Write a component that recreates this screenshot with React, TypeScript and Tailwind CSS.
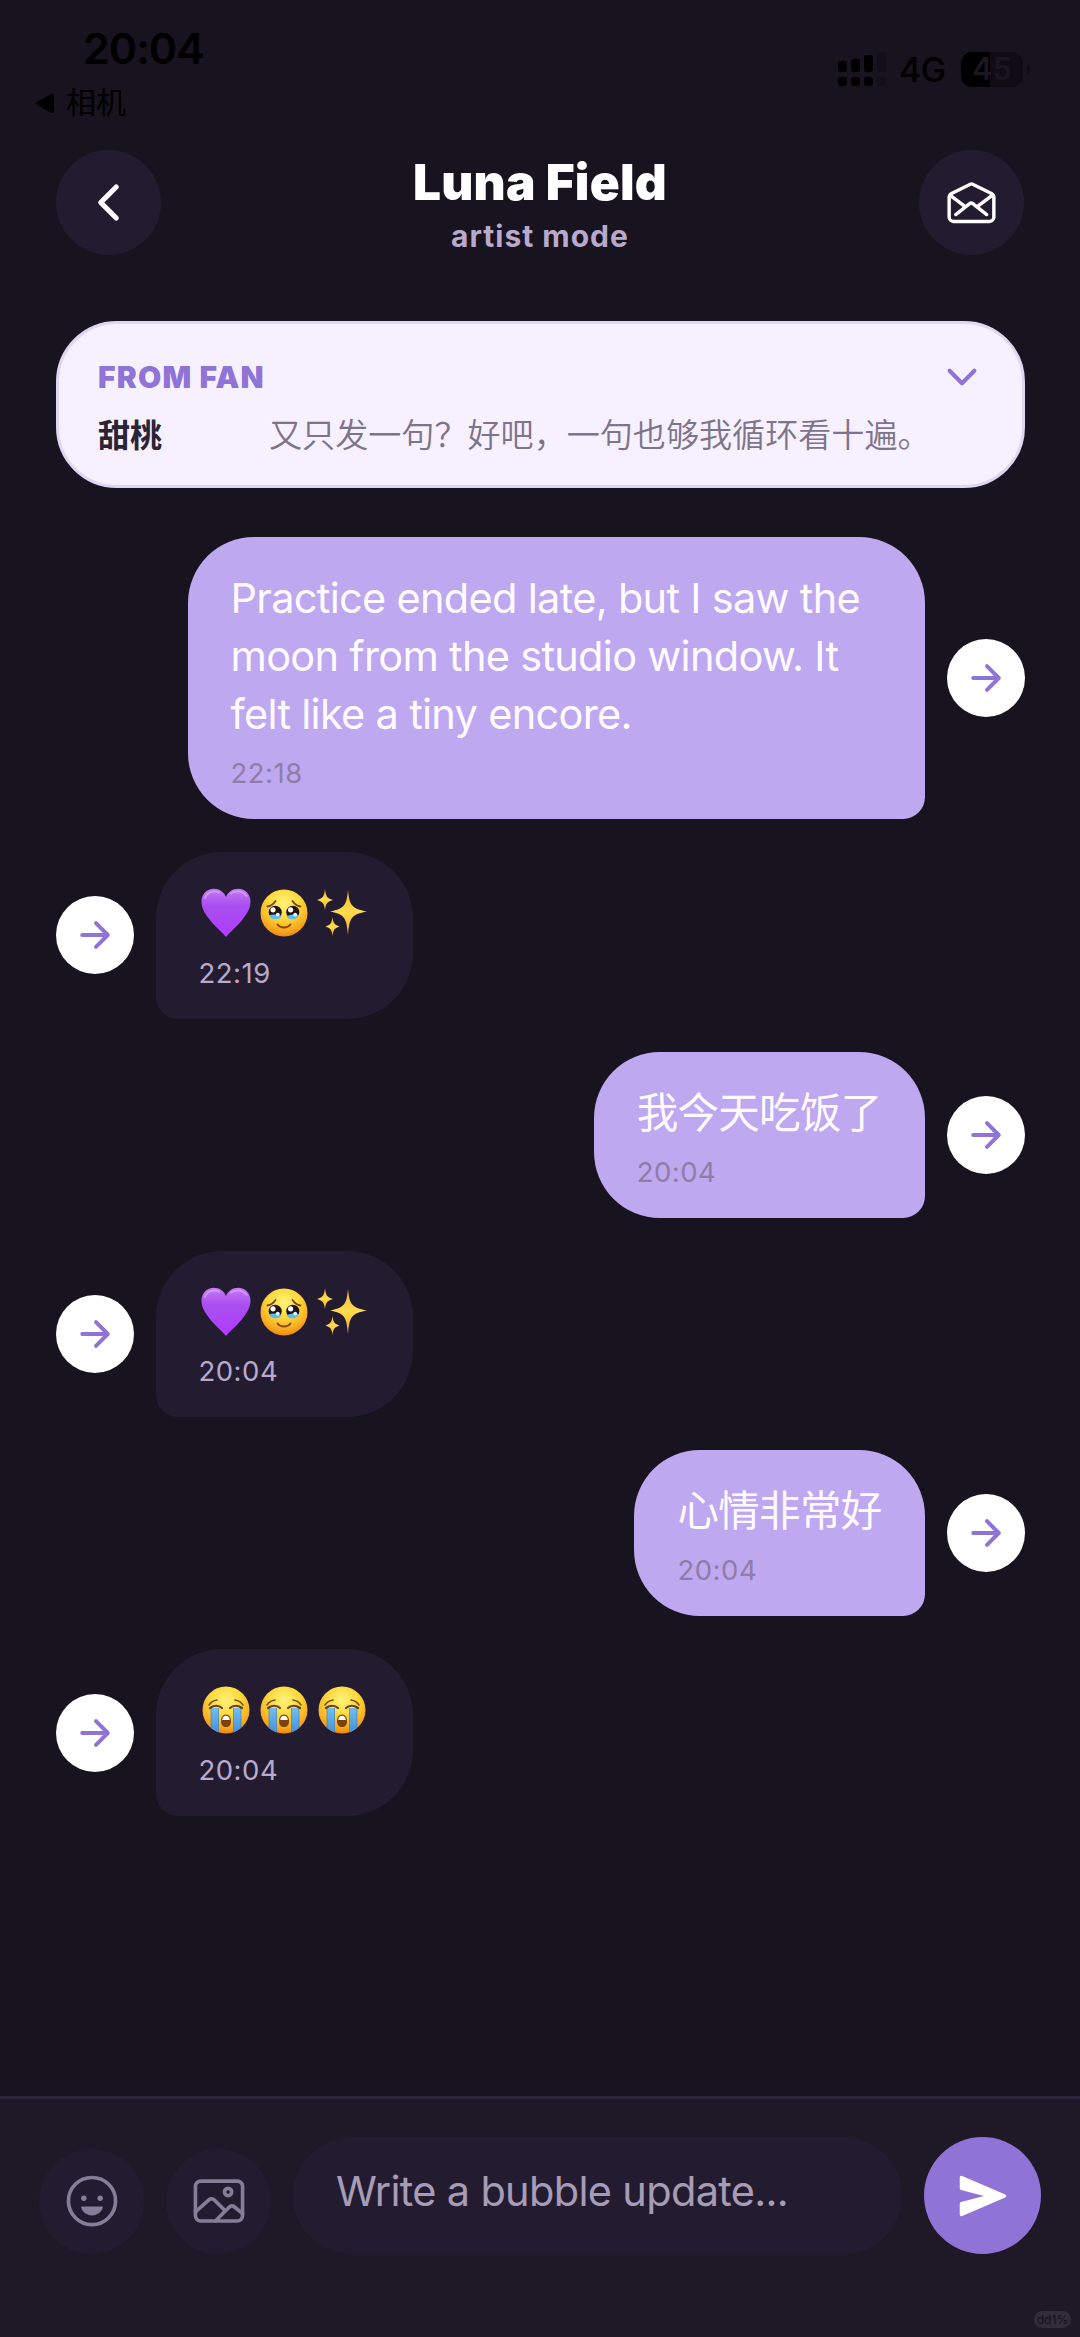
import type { ReactNode } from "react";
import {
  IoArrowForward,
  IoChevronBack,
  IoChevronDown,
  IoHappyOutline,
  IoImageOutline,
  IoMailOpenOutline,
} from "react-icons/io5";

type Message = {
  id: number;
  mine: boolean;
  time: string;
  text?: string;
  emojis?: string[];
};

const messages: Message[] = [
  {
    id: 1,
    mine: true,
    time: "22:18",
    text: "Practice ended late, but I saw the moon from the studio window. It felt like a tiny encore.",
  },
  { id: 2, mine: false, time: "22:19", emojis: ["heart", "tears", "sparkles"] },
  { id: 3, mine: true, time: "20:04", text: "我今天吃饭了" },
  { id: 4, mine: false, time: "20:04", emojis: ["heart", "tears", "sparkles"] },
  { id: 5, mine: true, time: "20:04", text: "心情非常好" },
  { id: 6, mine: false, time: "20:04", emojis: ["crying", "crying", "crying"] },
];

const EmojiDefs = () => (
  <svg className="absolute size-0" aria-hidden="true">
    <defs>
      <radialGradient id="face" cx="0.5" cy="0.3" r="0.72">
        <stop offset="0" stopColor="#fff27a" />
        <stop offset="0.45" stopColor="#fdd93c" />
        <stop offset="0.8" stopColor="#f9a91f" />
        <stop offset="1" stopColor="#e88610" />
      </radialGradient>
      <linearGradient id="heart" x1="0" y1="0" x2="0" y2="1">
        <stop offset="0" stopColor="#c57af2" />
        <stop offset="0.35" stopColor="#a94ff0" />
        <stop offset="1" stopColor="#b03bff" />
      </linearGradient>
      <linearGradient id="spark" x1="0" y1="0" x2="0" y2="1">
        <stop offset="0" stopColor="#f3b53c" />
        <stop offset="0.5" stopColor="#ffdc4c" />
        <stop offset="1" stopColor="#f0a92e" />
      </linearGradient>
      <linearGradient id="tear" x1="0" y1="0" x2="0" y2="1">
        <stop offset="0" stopColor="#74bdee" />
        <stop offset="1" stopColor="#3f8fe0" />
      </linearGradient>
      <clipPath id="faceClip">
        <circle cx="24" cy="24" r="23.5" />
      </clipPath>
    </defs>
  </svg>
);

const Heart = () => (
  <svg viewBox="0 0 50 50" className="h-[50px] w-[50px]" role="img" aria-label="💜">
    <path
      d="M25 49C22 45 14 39 7 29.5C2.5 23.5 .5 19 .5 13.5C.5 6 6 .8 12.8 .8C18.5 .8 23 4 25 9C27 4 31.5 .8 37.2 .8C44 .8 49.5 6 49.5 13.5C49.5 19 47.5 23.5 43 29.5C36 39 28 45 25 49Z"
      fill="url(#heart)"
    />
    <path d="M4 10C6 4 13 2 18 4.5" stroke="#dca6fa" strokeWidth="2" fill="none" strokeLinecap="round" opacity="0.7" />
    <path d="M30 5.5C35 2 42 3 45.5 8" stroke="#dca6fa" strokeWidth="2" fill="none" strokeLinecap="round" opacity="0.7" />
  </svg>
);

const Tears = () => (
  <svg viewBox="0 0 48 48" className="h-12 w-12" role="img" aria-label="🥹">
    <circle cx="24" cy="24" r="23.5" fill="url(#face)" />
    <path d="M7.5 17.5C10.5 17 13.5 15 15.5 12M40.5 17.5C37.5 17 34.5 15 32.5 12" stroke="#7a4410" strokeWidth="1.8" fill="none" strokeLinecap="round" />
    <circle cx="15.2" cy="23.2" r="6.5" fill="#1d1214" />
    <circle cx="32.8" cy="23.2" r="6.5" fill="#1d1214" />
    <path d="M9 26C13 25 18 25.5 21.5 27C20.5 31 11 32 9 26ZM39 26C35 25 30 25.5 26.5 27C27.5 31 37 32 39 26Z" fill="#58bdf0" />
    <circle cx="13" cy="20.8" r="2.6" fill="#fff" />
    <circle cx="30.6" cy="20.8" r="2.6" fill="#fff" />
    <circle cx="17.8" cy="25.6" r="1.9" fill="#e8f8ff" />
    <circle cx="35.2" cy="25.6" r="1.9" fill="#e8f8ff" />
    <path d="M17.5 35.5C20.5 39.5 27.5 39.5 30.5 35.5" stroke="#8a4a0c" strokeWidth="2" fill="none" strokeLinecap="round" />
  </svg>
);

const Sparkles = () => (
  <svg viewBox="0 0 50 50" className="h-[50px] w-[50px]" role="img" aria-label="✨">
    <path d="M31 2C32.5 17 34 20.5 50 23.5C34 26.5 32.5 30 31 47C29.5 30 28 26.5 13 23.5C28 20.5 29.5 17 31 2Z" fill="url(#spark)" />
    <path d="M8 1C8.9 8 9.5 10 16 12C9.5 14 8.9 16 8 22C7.1 16 6.5 14 0 12C6.5 10 7.1 8 8 1Z" fill="url(#spark)" />
    <path d="M15.5 29C16.3 35 17 36.5 22.5 38.5C17 40.5 16.3 42 15.5 48C14.7 42 14 40.5 8.5 38.5C14 36.5 14.7 35 15.5 29Z" fill="url(#spark)" />
  </svg>
);

const Crying = () => (
  <svg viewBox="0 0 48 48" className="h-12 w-12" role="img" aria-label="😭">
    <circle cx="24" cy="24" r="23.5" fill="url(#face)" />
    <g clipPath="url(#faceClip)">
      <path d="M9 22H16.5V48H9ZM31.5 22H39V48H31.5Z" fill="url(#tear)" />
      <path d="M9 22V48M16.5 22V48M31.5 22V48M39 22V48" stroke="#3a82bf" strokeWidth="0.7" />
    </g>
    <path d="M7 19C9 16 12 14.5 15 14M41 19C39 16 36 14.5 33 14" stroke="#7a4a10" strokeWidth="1.5" fill="none" strokeLinecap="round" />
    <path d="M8 22C12 19 17 19 20 22M40 22C36 19 31 19 28 22" stroke="#6b4210" strokeWidth="2.2" fill="none" strokeLinecap="round" />
    <path d="M24 28.5C27.5 28.5 29 31.5 29 35C29 39 27 41 24 41C21 41 19 39 19 35C19 31.5 20.5 28.5 24 28.5Z" fill="#7b430b" />
    <path d="M20.3 34C20.3 31 22 29.8 24 29.8S27.7 31 27.7 34Z" fill="#fff" />
  </svg>
);

const SendIcon = () => (
  <svg viewBox="0 0 48 42" className="h-[42px] w-12 text-white">
    <path
      d="M2.5 2.5L45.5 21L2.5 39.5V28.8L32 21L2.5 13.2Z"
      fill="currentColor"
      stroke="currentColor"
      strokeWidth="3.5"
      strokeLinejoin="round"
    />
  </svg>
);

const Emoji = ({ name }: { name: string }) => (
  <span className="flex w-[58px] justify-center">
    {name === "heart" && <Heart />}
    {name === "tears" && <Tears />}
    {name === "sparkles" && <Sparkles />}
    {name === "crying" && <Crying />}
  </span>
);

const RoundButton = ({ children }: { children: ReactNode }) => (
  <button className="flex size-[105px] shrink-0 items-center justify-center rounded-full bg-[#231c31]">
    {children}
  </button>
);

const StatusBar = () => (
  <div className="flex h-[150px] shrink-0 justify-between text-black">
    <div className="pl-[34px] pt-[22px]">
      <div className="pl-[49px] text-[43px] font-semibold leading-[52px] tracking-[-1px]">20:04</div>
      <div className="flex items-center gap-[11px] pt-2 text-[30px] leading-[40px]">
        <svg viewBox="0 0 20 20" className="mt-[2px] size-[21px]">
          <path d="M3 8.5L16 1.5Q19 0 19 3V17Q19 20 16 18.5L3 11.5Q0 10 3 8.5Z" fill="currentColor" />
        </svg>
        <span>相机</span>
      </div>
    </div>
    <div className="mt-[51px] flex h-9 items-center pr-[50px]">
      <svg viewBox="0 0 48 36" className="h-9 w-12">
        <rect x="0" y="10" width="9" height="11" rx="3" />
        <rect x="13" y="8" width="9" height="13" rx="3" />
        <rect x="26" y="4" width="9" height="17" rx="3" />
        <rect x="39" y="1" width="9" height="20" rx="3" fill="#120e1c" />
        <rect x="0" y="26" width="9" height="9" rx="3" />
        <rect x="13" y="26" width="9" height="9" rx="3" />
        <rect x="26" y="26" width="9" height="9" rx="3" />
        <rect x="39" y="26" width="9" height="9" rx="3" fill="#120e1c" />
      </svg>
      <span className="ml-[13px] w-[60px] text-[34px] font-medium tracking-[-0.5px]">4G</span>
      <div className="ml-[2px] flex h-[35px] w-[62px] items-center justify-center rounded-[11px] bg-linear-to-r from-black from-47% to-[#0f0c15] to-47% text-[31px] font-semibold text-[#1a1622]">
        45
      </div>
      <div className="ml-1 h-2 w-[3px] rounded-r bg-[#0f0c15]" />
    </div>
  </div>
);

const Header = () => (
  <header className="flex h-[105px] shrink-0 items-center justify-between px-[55.5px]">
    <RoundButton>
      <IoChevronBack className="size-[55px] text-white" />
    </RoundButton>
    <div className="flex flex-col items-center pt-[6px]">
      <h1 className="text-[49.5px] font-black leading-[60px] tracking-[0.2px] text-white">Luna Field</h1>
      <p className="text-[30px] font-bold leading-[48px] tracking-[1px] text-[#b9aacb]">artist mode</p>
    </div>
    <RoundButton>
      <IoMailOpenOutline className="size-[55px] text-white" />
    </RoundButton>
  </header>
);

const FanCard = () => (
  <section className="mx-[55.5px] mt-[66px] h-[167px] shrink-0 rounded-[61px] border-[3px] border-[#e0d5f3] bg-[#f6f0ff] pr-[38px] pl-[39.5px]">
    <div className="mt-[31px] flex h-11 items-center justify-between">
      <h2 className="text-[30px] font-black tracking-[1.2px] text-[#8f73d6]">FROM FAN</h2>
      <IoChevronDown className="size-[44px] text-[#8f73d6]" />
    </div>
    <div className="mt-[13px] flex h-12 items-center text-[33.1px]">
      <span className="w-[171px] text-[32px] font-bold text-[#2a2433]">甜桃</span>
      <span className="whitespace-nowrap font-[350] text-[#7d7489]">又只发一句？好吧，一句也够我循环看十遍。</span>
    </div>
  </section>
);

const Bubble = ({ message }: { message: Message }) => {
  const { mine, time, text, emojis } = message;
  return (
    <div className={`flex items-center gap-[22px] ${mine ? "justify-end" : "flex-row-reverse justify-end"}`}>
      <div
        className={`max-w-[737px] rounded-[66px] px-[43px] pt-8 pb-7 ${
          mine ? "rounded-br-[22px] bg-[#bea8f0]" : "rounded-bl-[22px] bg-[#231c31]"
        }`}
      >
        {text && <p className="text-[41.5px] leading-[58px] tracking-[-0.7px] text-[#fffaff]">{text}</p>}
        {emojis && (
          <div className="-mr-[1px] -ml-[2px] flex h-[58px] items-center">
            {emojis.map((name, i) => (
              <Emoji key={i} name={name} />
            ))}
          </div>
        )}
        <p className={`mt-[12.3px] h-9 text-[27.5px] leading-9 tracking-[0.5px] ${mine ? "text-[#907ca8]" : "text-[#b9aacb]"}`}>
          {time}
        </p>
      </div>
      <button className="flex size-[78px] shrink-0 items-center justify-center rounded-full bg-white">
        <IoArrowForward className="size-[42px] text-[#8f73d6]" />
      </button>
    </div>
  );
};

const Composer = () => (
  <footer className="relative flex h-[241px] shrink-0 items-start gap-[22px] border-t-[3px] border-[#2d2440] bg-[#1f1826] px-[39px] pt-[38px]">
    <div className="flex h-[117px] items-end gap-[22px]">
      <RoundButton>
        <IoHappyOutline className="mb-[2px] size-[58px] text-[#887d98]" />
      </RoundButton>
      <RoundButton>
        <IoImageOutline className="mb-[2px] size-[58px] text-[#887d98]" />
      </RoundButton>
    </div>
    <div className="flex h-[117px] flex-1 items-center rounded-[61px] bg-[#231c31] px-[43px] pb-[8px] text-[41.5px] tracking-[-0.68px] whitespace-nowrap text-[#a79cb6]">
      Write a bubble update...
    </div>
    <button className="flex size-[117px] shrink-0 items-center justify-center rounded-full bg-[#8f73d6]">
      <SendIcon />
    </button>
    <span className="absolute right-[9px] bottom-[9px] flex h-[17px] w-[37px] items-center justify-center rounded-full bg-[#332d3b] text-[12px] font-medium text-[#17121d]">
      dd1%
    </span>
  </footer>
);

export default function App() {
  return (
    <div className="flex h-[2337px] w-[1080px] flex-col overflow-hidden bg-[#17131f] font-['Inter','Noto_Sans_CJK_SC',sans-serif]">
      <EmojiDefs />
      <StatusBar />
      <Header />
      <FanCard />
      <main className="flex flex-1 flex-col gap-[33px] px-[55.5px] pt-[49px]">
        {messages.map((message) => (
          <Bubble key={message.id} message={message} />
        ))}
      </main>
      <Composer />
    </div>
  );
}
